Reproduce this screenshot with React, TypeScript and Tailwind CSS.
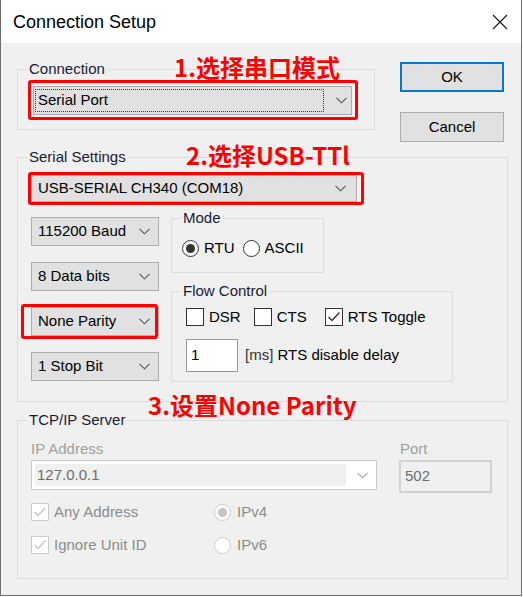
import React from "react";

// Modbus connection dialog, Windows 10 look, with red annotation marks

function Chevron({ color = "#555555" }: { color?: string }) {
  return (
    <svg width="11" height="7" viewBox="0 0 11 7">
      <path d="M0.5 0.8 L5.5 5.8 L10.5 0.8" fill="none" stroke={color} strokeWidth="1.1" />
    </svg>
  );
}

function Combo({ text, className }: { text: string; className: string }) {
  return (
    <div className={`flex items-center justify-between border border-[#adadad] bg-[#e1e1e1] ${className}`}>
      <span>{text}</span>
      <Chevron />
    </div>
  );
}

function Group({ title, className, children }: { title: string; className: string; children?: React.ReactNode }) {
  return (
    <div className={`relative border border-[#dcdcdc] ${className}`}>
      <span className="absolute -top-[10px] left-[9px] bg-[#f0f0f0] px-[2px] leading-[18px] text-[#1a1a38]">
        {title}
      </span>
      {children}
    </div>
  );
}

function Radio({ checked, disabled }: { checked?: boolean; disabled?: boolean }) {
  return (
    <span
      className={`flex h-[17px] w-[17px] items-center justify-center rounded-full border bg-white ${
        disabled ? "border-[#cccccc]" : "border-[#333333]"
      }`}
    >
      {checked && (
        <span className={`h-[9px] w-[9px] rounded-full ${disabled ? "bg-[#c4c4c4]" : "bg-[#333333]"}`} />
      )}
    </span>
  );
}

function Check({ checked, disabled }: { checked?: boolean; disabled?: boolean }) {
  const stroke = disabled ? "#c4c4c4" : "#333333";
  return (
    <span
      className={`flex h-[18px] w-[18px] items-center justify-center border bg-white ${
        disabled ? "border-[#cccccc]" : "border-[#333333]"
      }`}
    >
      {checked && (
        <svg width="14" height="12" viewBox="0 0 14 12">
          <path d="M1.5 6 L5 9.5 L12.5 1.5" fill="none" stroke={stroke} strokeWidth="1.3" />
        </svg>
      )}
    </span>
  );
}

function RedBox({ className }: { className: string }) {
  return <div className={`pointer-events-none absolute rounded-[3px] border-[3px] border-[#ff0000] ${className}`} />;
}

export default function App() {
  return (
    <div className="h-[597px] w-[523px] overflow-hidden font-['Liberation_Sans',Arial,sans-serif] text-[15px] text-black">
      <div className="flex h-[596px] w-[522px] flex-col border-x border-b border-[#6f6f6f] bg-[#f0f0f0]">
        {/* Title bar */}
        <div className="flex h-[43px] shrink-0 items-center justify-between bg-white pl-[12px] pr-[13px]">
          <span className="text-[18px] leading-[22px]">Connection Setup</span>
          <svg width="16" height="16" viewBox="0 0 16 16">
            <path d="M1 1 L15 15 M15 1 L1 15" stroke="#1a1a1a" strokeWidth="1.2" />
          </svg>
        </div>

        <div className="relative flex flex-1 flex-col pl-[16px]">
          {/* Connection + buttons */}
          <div className="mt-[19px] flex items-start">
            <Group title="Connection" className="mt-[7px] h-[61px] w-[358px] pl-[15px] pt-[16px]">
              <div className="relative w-[319px]">
                <div className="flex h-[29px] items-center border border-[#adadad] bg-[#e1e1e1] p-[1px] pr-[4px]">
                  <div className="flex h-[23px] flex-1 items-center border border-dotted border-[#333333] pl-[2px]">
                    Serial Port
                  </div>
                  <div className="flex w-[23px] justify-end">
                    <Chevron />
                  </div>
                </div>
                <RedBox className="-left-[5px] -top-[6px] h-[40px] w-[330px]" />
              </div>
            </Group>
            <div className="ml-[25px] flex flex-col gap-[20px]">
              <button className="flex h-[30px] w-[104px] items-center justify-center border-2 border-[#0078d7] bg-[#e1e1e1]">
                OK
              </button>
              <button className="flex h-[30px] w-[104px] items-center justify-center border border-[#adadad] bg-[#e1e1e1]">
                Cancel
              </button>
            </div>
          </div>

          {/* Serial settings */}
          <Group title="Serial Settings" className="mt-[15px] h-[245px] w-[491px] pl-[13px] pt-[17px]">
            <div className="relative w-[326px]">
              <Combo text="USB-SERIAL CH340 (COM18)" className="h-[27px] pl-[6px] pr-[10px]" />
              <RedBox className="-left-[3px] -top-[3px] h-[33px] w-[336px]" />
            </div>
            <div className="mt-[15px] flex items-start">
              <div className="flex w-[128px] flex-col gap-[16px]">
                <Combo text="115200 Baud" className="h-[29px] pl-[6px] pr-[8px]" />
                <Combo text="8 Data bits" className="h-[29px] pl-[6px] pr-[8px]" />
                <div className="relative">
                  <Combo text="None Parity" className="h-[29px] pl-[6px] pr-[8px]" />
                  <RedBox className="-left-[10px] -top-[3px] h-[35px] w-[137px]" />
                </div>
                <Combo text="1 Stop Bit" className="h-[29px] pl-[6px] pr-[8px]" />
              </div>
              <div className="ml-[12px] mt-[1px] flex flex-col gap-[18px]">
                <Group title="Mode" className="h-[55px] w-[153px] pl-[10px] pt-[20px]">
                  <div className="flex items-center leading-[18px]">
                    <Radio checked />
                    <span className="ml-[5px]">RTU</span>
                    <span className="ml-[8px]">
                      <Radio />
                    </span>
                    <span className="ml-[5px]">ASCII</span>
                  </div>
                </Group>
                <Group title="Flow Control" className="h-[91px] w-[282px] pl-[14px] pt-[16px]">
                  <div className="flex items-center leading-[18px]">
                    <Check />
                    <span className="ml-[5px]">DSR</span>
                    <span className="ml-[13px]">
                      <Check />
                    </span>
                    <span className="ml-[5px]">CTS</span>
                    <span className="ml-[18px]">
                      <Check checked />
                    </span>
                    <span className="ml-[5px]">RTS Toggle</span>
                  </div>
                  <div className="mt-[13px] flex items-center">
                    <div className="flex h-[33px] w-[52px] items-center border border-[#999999] bg-white pl-[4px]">1</div>
                    <span className="ml-[7px]">
                      <span className="text-[#333333]">[ms]</span> RTS disable delay
                    </span>
                  </div>
                </Group>
              </div>
            </div>
          </Group>

          {/* TCP/IP server (disabled) */}
          <Group title="TCP/IP Server" className="mt-[18px] h-[159px] w-[491px] pl-[13px] pt-[19px]">
            <div className="flex items-start">
              <div className="w-[346px]">
                <div className="leading-[18px] text-[#a0a0a0]">IP Address</div>
                <div className="mt-[2px] flex h-[30px] items-center border border-[#cccccc] bg-white p-[3px] pr-[8px]">
                  <div className="flex h-[22px] w-[311px] items-center bg-[#f0f0f0] pl-[2px] text-[#6d6d6d]">127.0.0.1</div>
                  <div className="flex flex-1 justify-end">
                    <Chevron color="#a6a6a6" />
                  </div>
                </div>
              </div>
              <div className="ml-[22px] w-[93px]">
                <div className="pl-[1px] leading-[18px] text-[#a0a0a0]">Port</div>
                <div className="mt-[2px] flex h-[33px] items-center border-2 border-[#d2d2d2] bg-[#f0f0f0] pl-[4px] text-[#6d6d6d]">
                  502
                </div>
              </div>
            </div>
            <div className="mt-[10px] grid grid-cols-[183px_auto] gap-y-[15px] leading-[18px] text-[#8c8c8c]">
              <div className="flex items-center">
                <Check checked disabled />
                <span className="ml-[5px]">Any Address</span>
              </div>
              <div className="flex items-center">
                <Radio checked disabled />
                <span className="ml-[6px]">IPv4</span>
              </div>
              <div className="flex items-center">
                <Check checked disabled />
                <span className="ml-[5px]">Ignore Unit ID</span>
              </div>
              <div className="flex items-center">
                <Radio disabled />
                <span className="ml-[6px]">IPv6</span>
              </div>
            </div>
          </Group>

          {/* Annotations */}
          <span className="absolute left-[173px] top-[12px] font-['Noto_Sans_CJK_SC',sans-serif] text-[24px] font-bold leading-none text-[#ff0000]">
            1.选择串口模式
          </span>
          <span className="absolute left-[185px] top-[100px] font-['Noto_Sans_CJK_SC',sans-serif] text-[24px] font-bold leading-none text-[#ff0000]">
            2.选择USB-TTl
          </span>
          <span className="absolute left-[147px] top-[350px] font-['Noto_Sans_CJK_SC',sans-serif] text-[24px] font-bold leading-none text-[#ff0000]">
            3.设置None Parity
          </span>
        </div>
      </div>
    </div>
  );
}
